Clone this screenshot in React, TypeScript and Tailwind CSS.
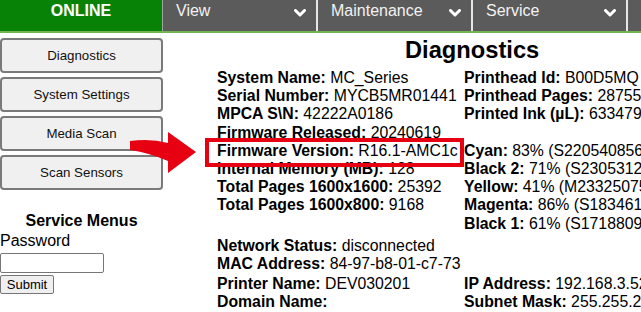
import React from 'react';

const Chevron = () => (
  <svg width="12" height="8" viewBox="0 0 12 8" className="shrink-0">
    <polyline points="1.5,1.5 6,6 10.5,1.5" fill="none" stroke="#ffffff" strokeWidth="3" strokeLinecap="round" strokeLinejoin="round" />
  </svg>
);

const tabs = ['View', 'Maintenance', 'Service'];
const sideButtons = ['Diagnostics', 'System Settings', 'Media Scan', 'Scan Sensors'];

type Cell = [string, string] | null;

const infoRows: [Cell, Cell][] = [
  [['System Name:', 'MC_Series'], ['Printhead Id:', 'B00D5MQ']],
  [['Serial Number:', 'MYCB5MR01441'], ['Printhead Pages:', '28755']],
  [['MPCA S\\N:', '42222A0186'], ['Printed Ink (µL):', '633479']],
  [['Firmware Released:', '20240619'], null],
  [['Firmware Version:', 'R16.1-AMC1c'], ['Cyan:', '83% (S220540856']],
  [['Internal Memory (MB):', '128'], ['Black 2:', '71% (S2305312']],
  [['Total Pages 1600x1600:', '25392'], ['Yellow:', '41% (M23325075']],
  [['Total Pages 1600x800:', '9168'], ['Magenta:', '86% (S183461']],
  [null, ['Black 1:', '61% (S1718809']],
];

const Field = ({ cell }: { cell: Cell }) =>
  cell ? (
    <div className="whitespace-nowrap">
      <span className="font-bold">{cell[0]}</span> {cell[1]}
    </div>
  ) : (
    <div />
  );

export default function App() {
  return (
    <div className="relative w-[641px] h-[312px] overflow-hidden bg-white text-black font-['Liberation_Sans',Arial,sans-serif]">
      {/* Top nav */}
      <div className="flex h-[33px] border-b-2 border-[#74b254] bg-[#5b5b5b]">
        <div className="w-[163px] bg-[#078207] border-r border-[#9aa89a] text-white font-bold text-[16px] leading-[18px] text-center pt-[2px]">
          ONLINE
        </div>
        {tabs.map((t) => (
          <div key={t} className="w-[155px] border-r-2 border-[#e6e6e6] flex items-start justify-between pl-[13px] pr-[10px] pt-[2px]">
            <span className="text-[16px] leading-[18px] text-[#f2f2f2]">{t}</span>
            <span className="pt-[7px]"><Chevron /></span>
          </div>
        ))}
      </div>

      <div className="flex">
        {/* Sidebar */}
        <div className="w-[163px] shrink-0 flex flex-col">
          <div className="flex flex-col gap-[4px] pt-[5px]">
            {sideButtons.map((b) => (
              <div key={b} className="h-[35px] rounded-[4px] border-2 border-[#7a7a7a] bg-[#f0f0f0] flex items-center justify-center text-[13.3px] text-[#111]">
                {b}
              </div>
            ))}
          </div>
          <div className="mt-[22px] text-center font-bold text-[16px] leading-[18px]">Service Menus</div>
          <div className="mt-[2px] text-[16px] leading-[18px]">Password</div>
          <div className="mt-[3px] w-[104px] h-[20px] border border-[#767676] rounded-[2px] bg-white" />
          <div className="mt-[2px] w-[54px] h-[19px] border border-[#767676] rounded-[2px] bg-[#efefef] flex items-center justify-center text-[13px]">
            Submit
          </div>
        </div>

        {/* Main */}
        <div className="flex-1 pl-[54px] text-[15.8px] leading-[18.2px]">
          <h2 className="mt-[3px] pl-[188px] h-[28px] text-[23.7px] leading-[28px] font-bold whitespace-nowrap">Diagnostics</h2>
          <div className="mt-[5px] grid grid-cols-[247px_1fr]">
            {infoRows.map(([l, r], i) => (
              <React.Fragment key={i}>
                <Field cell={l} />
                <Field cell={r} />
              </React.Fragment>
            ))}
          </div>
          <div className="mt-[4px]">
            <Field cell={['Network Status:', 'disconnected']} />
            <Field cell={['MAC Address:', '84-97-b8-01-c7-73']} />
          </div>
          <div className="mt-[2px] grid grid-cols-[247px_1fr]">
            <Field cell={['Printer Name:', 'DEV030201']} />
            <Field cell={['IP Address:', '192.168.3.52']} />
            <Field cell={['Domain Name:', '']} />
            <Field cell={['Subnet Mask:', '255.255.255.0']} />
          </div>
        </div>
      </div>

      {/* Highlight box */}
      <div className="absolute left-[205px] top-[138px] w-[259px] h-[29px] border-4 border-[#e60012] pointer-events-none" />

      {/* Curved arrow */}
      <svg className="absolute left-[128px] top-[128px] pointer-events-none" width="72" height="48" viewBox="0 0 72 48">
        <path d="M2,13 Q22,10 40,15 L40,4 L68,24 L40,45 L40,33 Q22,25 2,22 Z" fill="#e60012" />
      </svg>
    </div>
  );
}
